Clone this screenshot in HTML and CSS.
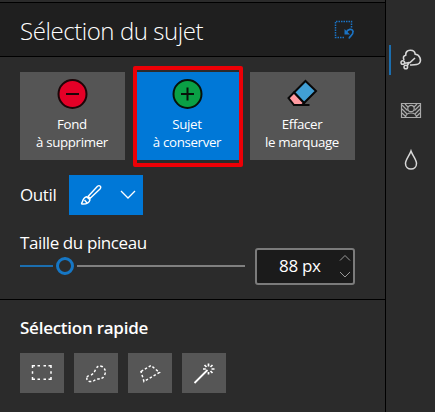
FILE: index.html
```html
<!DOCTYPE html>
<html lang="fr">
<head>
<meta charset="utf-8">
<title>Sélection du sujet</title>
<link rel="stylesheet" href="styles.css">
</head>
<body>
<div class="app">
  <main class="panel">
    <header class="header">
      <h1>Sélection du sujet</h1>
      <svg class="reset" width="22" height="22" viewBox="0 0 22 22" fill="none" stroke="#1b73c4">
        <path d="M11 18.500H2.500V2.500H18.500V9" stroke-width="1.500" stroke-dasharray="1.500 1"/>
        <path d="M13 14C14.500 10 19.500 9 20 12.500C20.500 15.500 17 17 16 19.500" stroke-width="1.700"/>
        <path d="M11.500 10V15.500H17Z" fill="#1b73c4" stroke="none"/>
      </svg>
    </header>
    <section class="marking">
      <div class="modes">
        <button class="mode">
          <svg width="32" height="32" viewBox="0 0 32 32"><circle cx="15.500" cy="16" r="14" fill="#e50027" stroke="#1d0508" stroke-width="2"/><path d="M9 16H22" stroke="#1d0508" stroke-width="2"/></svg>
          <span>Fond<br>à supprimer</span>
        </button>
        <button class="mode active">
          <svg width="32" height="32" viewBox="0 0 32 32"><circle cx="15.500" cy="16" r="14" fill="#0aa045" stroke="#071209" stroke-width="2"/><path d="M9 16H22M15.500 9.500V22.500" stroke="#071209" stroke-width="2"/></svg>
          <span>Sujet<br>à conserver</span>
        </button>
        <button class="mode">
          <svg width="32" height="32" viewBox="0 0 32 32" stroke="#080808" stroke-width="2"><path d="M18.500 3L29 13L17 25L7 14.500Z" fill="#419fd5"/><path d="M7 14.500L17 25L15 27H7L1.500 20Z" fill="#ff9aa0"/><path d="M6.500 27H22.500"/></svg>
          <span>Effacer<br>le marquage</span>
        </button>
      </div>
      <div class="tool">
        <span class="label">Outil</span>
        <button class="picker">
          <svg width="22" height="22" viewBox="0 0 22 22" fill="none" stroke="#fff" stroke-width="1.400" stroke-linejoin="round"><path d="M8 12.500L17.500 2.300Q19 1 20.300 2.200Q21.300 3.500 20 5L10.200 14.300Z"/><path d="M6.500 12.700L10 15.800Q9 20.300 2 20Q1 19.500 2.200 18.300Q3.500 13.500 6.500 12.700ZM8 12.500L10.200 14.300M4.500 16L7 19"/></svg>
          <svg width="16" height="10" viewBox="0 0 16 10" fill="none" stroke="#fff" stroke-width="1.300"><path d="M1 1L8 8L15 1"/></svg>
        </button>
      </div>
      <div class="size">
        <div class="range">
          <span class="label">Taille du pinceau</span>
          <div class="slider"><i class="filled"></i><i class="thumb"></i><i class="rest"></i></div>
        </div>
        <div class="field">
          <span class="value">88 px</span>
          <svg width="12" height="28" viewBox="0 0 12 28" fill="none" stroke="#999" stroke-width="1"><path d="M1 7.500L6 2.500L11 7.500M1 19L6 24L11 19"/></svg>
        </div>
      </div>
    </section>
    <section class="quick">
      <h2>Sélection rapide</h2>
      <div class="shapes">
        <button><svg width="24" height="24" viewBox="0 0 24 24"><path d="M2.500 7V4.800H5M18.500 4.800H21V7M21 16V18.300H18.500M5 18.300H2.500V16M7.500 4.800H10M13.500 4.800H16M7.500 18.300H10M13.500 18.300H16M2.500 10.200V12.800M21 10.200V12.800"/></svg></button>
        <button><svg width="24" height="24" viewBox="0 0 24 24"><path stroke-dasharray="2.500 2" d="M3 16Q4 14.500 7 14Q10 12.500 11.500 8.500Q14 3.500 18 5.500Q23 8.500 20.500 14.500Q18.500 18.500 12 18Q9.500 21 5.500 20.500Q2 19.500 3 16Z"/></svg></button>
        <button><svg width="24" height="24" viewBox="0 0 24 24"><path stroke-dasharray="2.500 2" d="M3 10.500L13 4.500L21.500 11.500L6 20.500Z"/></svg></button>
        <button><svg width="24" height="24" viewBox="0 0 24 24"><path d="M2.500 22L15.500 9" stroke-width="1.800"/><path d="M16.500 2.500V5.500M16.500 11V13.500M11 8H13.800M19.500 8H22.500M12.500 4L14.500 6M20.500 4L18.500 6M20.500 12L18.500 10" stroke-width="1.700"/></svg></button>
      </div>
    </section>
  </main>
  <nav class="rail">
    <a class="current"><svg width="24" height="24" viewBox="0 0 24 24"><path d="M5 12C3.800 9.500 4.500 7.600 6.700 7.200C6.500 .8 15.500 .8 16.200 6.200C20.500 6.500 23 12 20.300 15.300C18.500 17.300 14 17 11 17M5.500 15.300L11 14.500L16 10M8 18L10.500 14" stroke-width="1.600"/><circle cx="3.800" cy="14.500" r="1.800"/><circle cx="6.800" cy="19" r="1.800"/></svg></a>
    <a><svg width="24" height="24" viewBox="0 0 24 24" class="dim"><path d="M2.500 5.500H21.500V19.500H2.500Z"/><circle cx="12" cy="10.500" r="3.200"/><path d="M6.500 19.500C7 13.500 17 13.500 17.500 19.500M3 7L8.500 12.500M3 11L8 16M3 15L6.500 18.500M6 6L9 9M21 7L15.500 12.500M21 11L16 16M21 15L17.500 18.500M18 6L15 9"/></svg></a>
    <a><svg width="24" height="24" viewBox="0 0 24 24"><path d="M12 3C10.500 7.500 6.500 11.500 6.500 15.500C6.500 22.800 17.500 22.800 17.500 15.500C17.500 11.500 13.500 7.500 12 3Z"/></svg></a>
  </nav>
</div>
</body>
</html>
```

FILE: styles.css
```css
* { box-sizing: border-box; }
body { margin: 0; background: #2b2b2b; color: #fff; font-family: "Open Sans", "Noto Sans", sans-serif; overflow: hidden; }
button { border: 0; padding: 0; margin: 0; color: #fff; font-family: inherit; background: #555; }
svg { display: block; }
.app { display: flex; width: 435px; height: 412px; }
.panel { width: 386px; border-right: 1px solid #000; padding-top: 2px; }
.header { height: 55px; border-top: 1px solid #000; border-bottom: 1px solid #000; background: #1f1f1f; display: flex; justify-content: space-between; align-items: center; padding: 0 30px 0 20px; }
h1 { margin: 0; font-size: 24px; font-weight: 300; line-height: 30px; letter-spacing: -.43px; white-space: nowrap; padding-top: 3px; }
.marking { height: 243px; border-bottom: 1px solid #000; padding: 15px 30px 0 20px; }
.modes { display: flex; gap: 10px; }
.mode { width: 105px; height: 88px; display: flex; flex-direction: column; align-items: center; padding-top: 6px; font-size: 13.300px; line-height: 18px; letter-spacing: -.35px; white-space: nowrap; }
.mode > span { margin-top: 5px; margin-right: 1px; }
.active { background: #0078d7; position: relative; }
.active::after { content: ""; position: absolute; inset: -6px -3px -7px -2px; border: 4px solid #ed0006; border-radius: 2px; }
.tool { display: flex; align-items: center; margin-top: 15px; height: 40px; }
.label { font-size: 17px; line-height: 22px; letter-spacing: -.4px; white-space: nowrap; }
.tool .label { width: 49px; }
.picker { width: 74px; height: 40px; background: #0078d7; display: flex; align-items: center; justify-content: space-between; padding: 0 7px 0 11px; }
.size { display: flex; justify-content: space-between; margin-top: 17px; }
.range { width: 225px; }
.range .label { display: block; }
.slider { display: flex; align-items: center; height: 18px; margin-top: 3px; }
.filled { width: 33px; height: 2px; background: #1b6eaf; }
.thumb { width: 18px; height: 18px; border: 3px solid #1677c5; border-radius: 50%; margin: 0 3px; }
.rest { flex: 1; height: 2px; background: #808080; }
.field { width: 100px; height: 37px; margin-top: 16px; border: 2px solid #7b7b7b; border-radius: 3px; background: #1b1b1b; display: flex; align-items: center; justify-content: space-between; padding: 0 2px 0 22px; }
.value { font-size: 17px; letter-spacing: -.3px; white-space: nowrap; margin-top: -2px; }
.quick { padding: 17px 0 0 20px; }
h2 { margin: 0; font-size: 17px; line-height: 22px; font-weight: 600; letter-spacing: -.25px; white-space: nowrap; }
.shapes { display: flex; gap: 10px; margin-top: 14px; }
.shapes button { width: 44px; height: 40px; display: flex; align-items: center; justify-content: center; background: #565656; }
.shapes svg { fill: none; stroke: #fff; stroke-width: 1.500; margin-right: 1px; }
.rail { flex: 1; display: flex; flex-direction: column; padding-top: 45px; gap: 20px; }
.rail a { display: flex; align-items: center; width: 45px; height: 30px; padding-left: 13px; }
.rail .current { margin-left: 3px; padding-left: 8px; border-left: 2px solid #1b6eaf; }
.rail svg { fill: none; stroke: #d8d8d8; stroke-width: 1.500; }
.rail .dim { stroke: #aaa; stroke-width: 1.200; }
```
